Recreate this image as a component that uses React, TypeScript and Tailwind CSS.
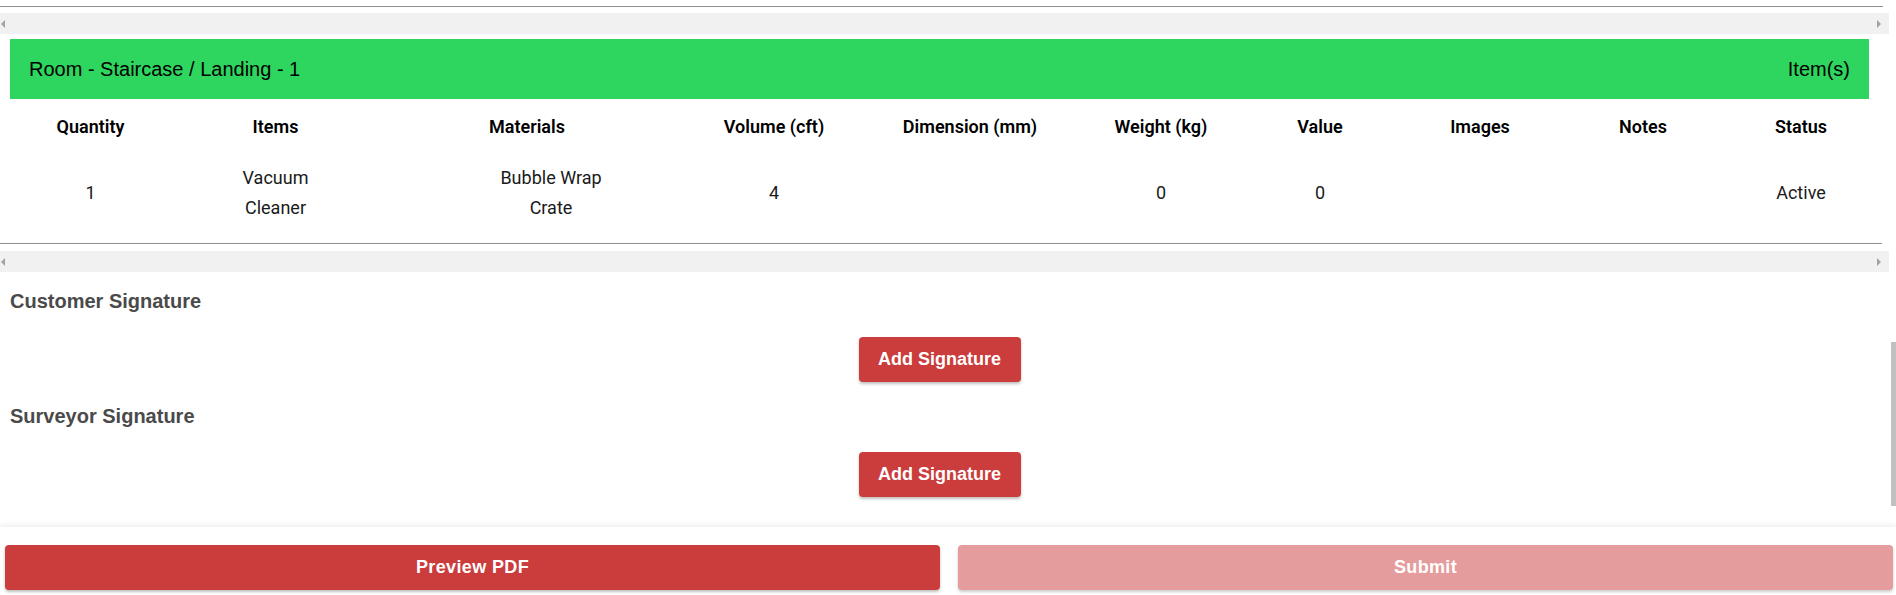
const columns = [
  "Quantity",
  "Items",
  "Materials",
  "Volume (cft)",
  "Dimension (mm)",
  "Weight (kg)",
  "Value",
  "Images",
  "Notes",
  "Status",
];

function ScrollTrack() {
  // old style horizontal scrollbar: gray track with arrows at both ends
  return (
    <div className="flex h-[21px] items-center justify-between bg-[#f1f1f1]">
      <span className="ml-[1px] h-0 w-0 border-y-[4px] border-r-[4px] border-y-transparent border-r-[#a3a3a3]" />
      <span className="mr-[8px] h-0 w-0 border-y-[4px] border-l-[4px] border-y-transparent border-l-[#a3a3a3]" />
    </div>
  );
}

function SignatureBlock({ title, top }: { title: string; top: string }) {
  return (
    <div className={top}>
      <h3 className="font-['Liberation_Sans',Arial,sans-serif] text-[20px] leading-[24px] font-bold text-[#4a4a4a]">
        {title}
      </h3>
      <div className="mt-[24px] flex justify-center">
        <button className="h-[45px] w-[162px] rounded-[4px] bg-[#cb3c3c] font-['Liberation_Sans',Arial,sans-serif] text-[18px] font-bold text-white shadow-[0_2px_3px_rgba(0,0,0,0.25)]">
          Add Signature
        </button>
      </div>
    </div>
  );
}

export default function App() {
  return (
    <div className="flex h-[595px] w-[1896px] flex-col overflow-hidden bg-white">
      <div className="flex h-[527px] shrink-0">
        <div className="w-[1889px] shrink-0">
          {/* bottom of the previous room table */}
          <div className="h-[7px] w-[1883px] border-b border-[#8f8f8f]" />
          <div className="mt-[6px]">
            <ScrollTrack />
          </div>

          <div className="ml-[10px] mr-[20px] mt-[5px] flex h-[60px] items-center justify-between bg-[#2ed65f] px-[19px] font-['Liberation_Sans',Arial,sans-serif] text-[20px] text-black">
            <span>Room - Staircase / Landing - 1</span>
            <span>Item(s)</span>
          </div>

          <div className="w-[1882px] border-b border-[#8f8f8f] font-['Roboto',sans-serif] text-[18px] text-black">
            <div className="grid h-[54px] grid-cols-[181px_189px_314px_180px_212px_170px_148px_172px_154px_162px] items-center text-center font-semibold">
              {columns.map((c) => (
                <div key={c}>{c}</div>
              ))}
            </div>
            <div className="grid grid-cols-[181px_189px_314px_180px_212px_170px_148px_172px_154px_162px] items-center pt-[10px] pb-[20px] text-center leading-[30px] text-[#1a1a1a]">
              <div>1</div>
              <div className="mx-auto max-w-[100px]">Vacuum Cleaner</div>
              <div className="pl-[48px]">
                <div>Bubble Wrap</div>
                <div>Crate</div>
              </div>
              <div>4</div>
              <div />
              <div>0</div>
              <div>0</div>
              <div />
              <div />
              <div>Active</div>
            </div>
          </div>
          <div className="mt-[7px]">
            <ScrollTrack />
          </div>

          <div className="ml-[10px] mr-[20px]">
            <SignatureBlock title="Customer Signature" top="mt-[17px]" />
            <SignatureBlock title="Surveyor Signature" top="mt-[22px]" />
          </div>
        </div>

        {/* page scrollbar */}
        <div className="w-[7px] shrink-0 bg-white">
          <div className="ml-[2px] mt-[342px] h-[164px] w-[5px] bg-[#c1c1c1]" />
        </div>
      </div>

      <div className="flex-1 bg-white pl-[5px] pr-[3px] pt-[18px] shadow-[0_-2px_5px_rgba(0,0,0,0.07)]">
        <div className="grid grid-cols-2 gap-[18px] font-['Liberation_Sans',Arial,sans-serif] text-[18px] font-bold tracking-[0.02em] text-white">
          <button className="h-[45px] rounded-[4px] bg-[#cb3c3c] shadow-[0_2px_3px_rgba(0,0,0,0.25)]">
            Preview PDF
          </button>
          <button className="h-[45px] rounded-[4px] bg-[#e59c9c] shadow-[0_2px_3px_rgba(0,0,0,0.2)]">
            Submit
          </button>
        </div>
      </div>
    </div>
  );
}
